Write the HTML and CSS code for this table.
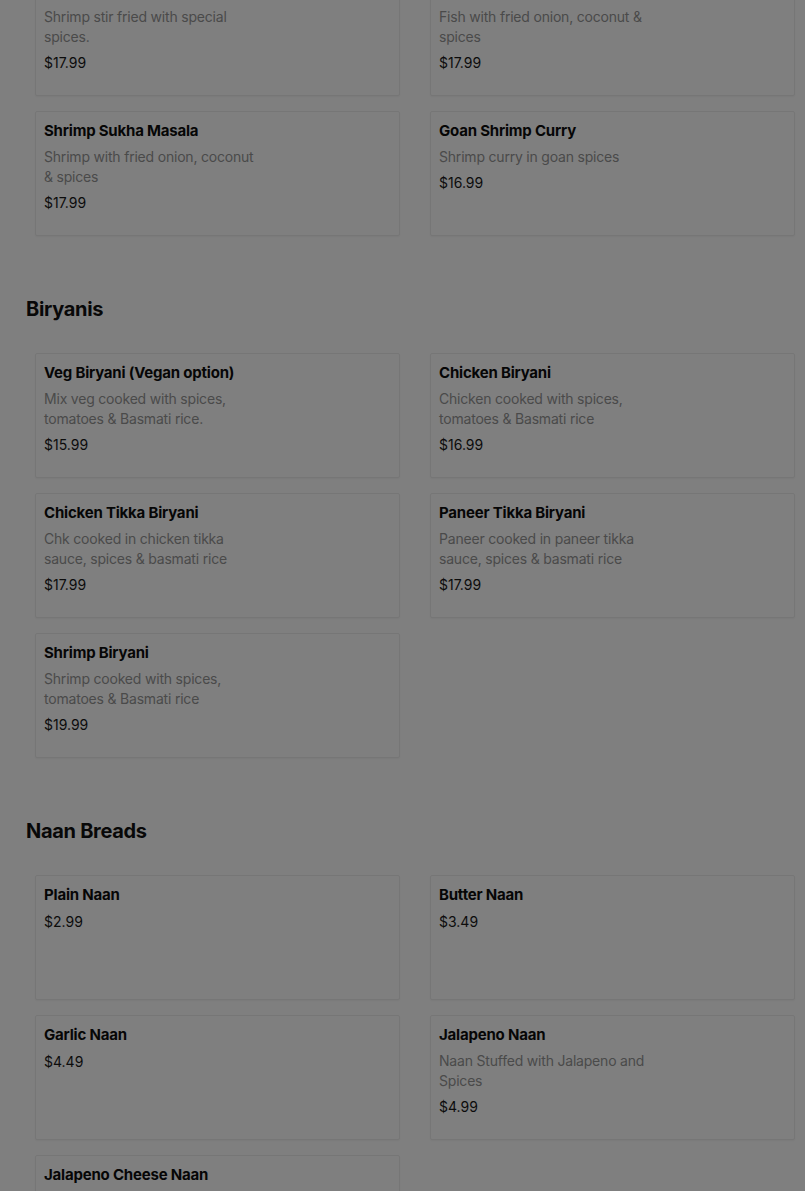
FILE: index.html
```html
<!DOCTYPE html>
<html lang="en">
<head>
<meta charset="utf-8">
<title>Menu</title>
<link rel="stylesheet" href="styles.css">
</head>
<body>
<main class="menu">
  <section class="section section-first">
    <div class="grid">
      <article class="card">
        <h3 class="item-name">Shrimp Chilli Fry</h3>
        <p class="item-desc">Shrimp stir fried with special spices.</p>
        <p class="item-price">$17.99</p>
      </article>
      <article class="card">
        <h3 class="item-name">Fish Sukha Masala</h3>
        <p class="item-desc">Fish with fried onion, coconut &amp; spices</p>
        <p class="item-price">$17.99</p>
      </article>
      <article class="card">
        <h3 class="item-name">Shrimp Sukha Masala</h3>
        <p class="item-desc">Shrimp with fried onion, coconut &amp; spices</p>
        <p class="item-price">$17.99</p>
      </article>
      <article class="card">
        <h3 class="item-name">Goan Shrimp Curry</h3>
        <p class="item-desc">Shrimp curry in goan spices</p>
        <p class="item-price">$16.99</p>
      </article>
    </div>
  </section>

  <section class="section">
    <h2 class="section-title">Biryanis</h2>
    <div class="grid">
      <article class="card">
        <h3 class="item-name">Veg Biryani (Vegan option)</h3>
        <p class="item-desc">Mix veg cooked with spices, tomatoes &amp; Basmati rice.</p>
        <p class="item-price">$15.99</p>
      </article>
      <article class="card">
        <h3 class="item-name">Chicken Biryani</h3>
        <p class="item-desc">Chicken cooked with spices, tomatoes &amp; Basmati rice</p>
        <p class="item-price">$16.99</p>
      </article>
      <article class="card">
        <h3 class="item-name">Chicken Tikka Biryani</h3>
        <p class="item-desc">Chk cooked in chicken tikka sauce, spices &amp; basmati rice</p>
        <p class="item-price">$17.99</p>
      </article>
      <article class="card">
        <h3 class="item-name">Paneer Tikka Biryani</h3>
        <p class="item-desc">Paneer cooked in paneer tikka sauce, spices &amp; basmati rice</p>
        <p class="item-price">$17.99</p>
      </article>
      <article class="card">
        <h3 class="item-name">Shrimp Biryani</h3>
        <p class="item-desc">Shrimp cooked with spices, tomatoes &amp; Basmati rice</p>
        <p class="item-price">$19.99</p>
      </article>
    </div>
  </section>

  <section class="section">
    <h2 class="section-title">Naan Breads</h2>
    <div class="grid">
      <article class="card">
        <h3 class="item-name">Plain Naan</h3>
        <p class="item-price">$2.99</p>
      </article>
      <article class="card">
        <h3 class="item-name">Butter Naan</h3>
        <p class="item-price">$3.49</p>
      </article>
      <article class="card">
        <h3 class="item-name">Garlic Naan</h3>
        <p class="item-price">$4.49</p>
      </article>
      <article class="card">
        <h3 class="item-name">Jalapeno Naan</h3>
        <p class="item-desc">Naan Stuffed with Jalapeno and Spices</p>
        <p class="item-price">$4.99</p>
      </article>
      <article class="card">
        <h3 class="item-name">Jalapeno Cheese Naan</h3>
        <p class="item-desc">Naan stuffed with jalapeno and cheese</p>
        <p class="item-price">$5.49</p>
      </article>
    </div>
  </section>
</main>
<div class="backdrop"></div>
</body>
</html>
```

FILE: styles.css
```css
html, body {
  margin: 0;
  padding: 0;
  background: #ffffff;
}

body {
  font-family: Inter, "Noto Sans", "Liberation Sans", sans-serif;
  color: #191919;
  overflow: hidden;
}

.menu {
  padding: 0 10px 0 26px;
}

.section {
  margin-top: 59px;
}

.section-first {
  margin-top: -29px;
}

.section-title {
  margin: 0 0 30px 0;
  font-size: 20px;
  line-height: 28px;
  font-weight: 700;
  letter-spacing: -0.3px;
  color: #111111;
}

.grid {
  margin-left: 9px;
  display: grid;
  grid-template-columns: 1fr 1fr;
  column-gap: 30px;
  row-gap: 15px;
}

.card {
  box-sizing: border-box;
  height: 125px;
  padding: 9px 8px 8px;
  border: 1px solid #ededed;
  border-radius: 2px;
  box-shadow: 0 1px 2px rgba(0, 0, 0, 0.05);
  background: #ffffff;
}

.item-name {
  margin: 0 0 6px 0;
  font-size: 15px;
  line-height: 20px;
  font-weight: 700;
  letter-spacing: -0.2px;
  color: #0d0d0d;
}

.item-desc {
  margin: 0 0 6px 0;
  max-width: 216px;
  font-size: 14px;
  line-height: 20px;
  letter-spacing: -0.2px;
  color: #959595;
}

.item-name + .item-price {
  margin-top: 7px;
}

.item-price {
  margin: 0;
  font-size: 14px;
  line-height: 20px;
  color: #191919;
}

.backdrop {
  position: fixed;
  inset: 0;
  background: rgba(0, 0, 0, 0.5);
}
```
